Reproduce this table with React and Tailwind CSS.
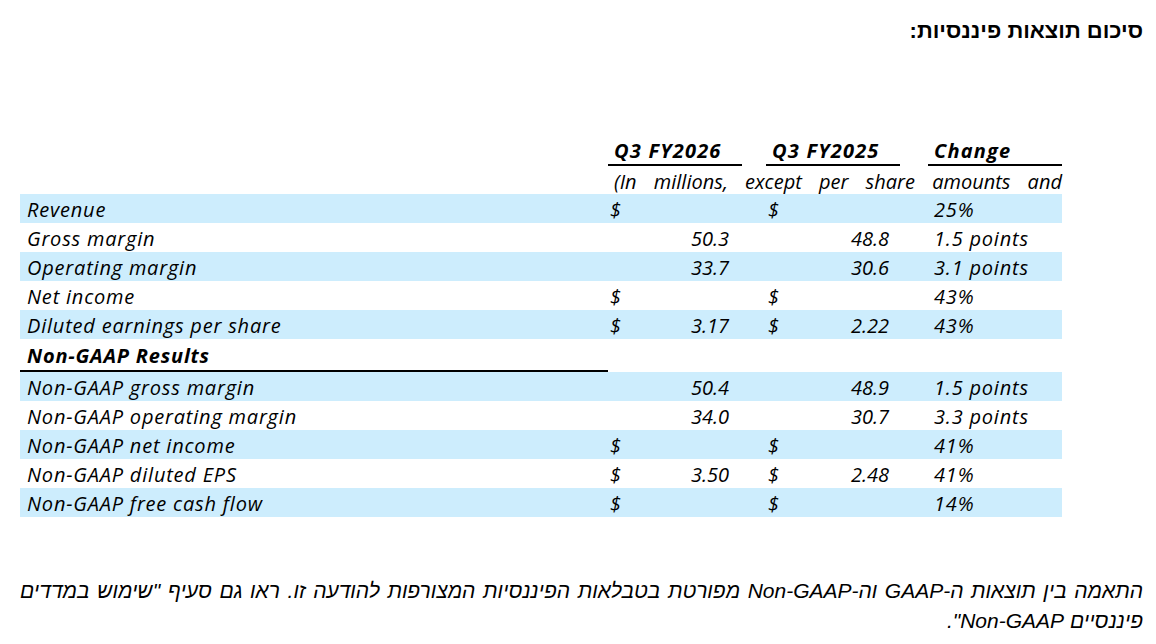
const rows = [
  { label: 'Revenue', d1: true, v1: '', d2: true, v2: '', change: '25%', blue: true },
  { label: 'Gross margin', v1: '50.3', v2: '48.8', change: '1.5 points' },
  { label: 'Operating margin', v1: '33.7', v2: '30.6', change: '3.1 points', blue: true },
  { label: 'Net income', d1: true, v1: '', d2: true, v2: '', change: '43%' },
  { label: 'Diluted earnings per share', d1: true, v1: '3.17', d2: true, v2: '2.22', change: '43%', blue: true },
];

const nonGaapRows = [
  { label: 'Non-GAAP gross margin', v1: '50.4', v2: '48.9', change: '1.5 points', blue: true },
  { label: 'Non-GAAP operating margin', v1: '34.0', v2: '30.7', change: '3.3 points' },
  { label: 'Non-GAAP net income', d1: true, v1: '', d2: true, v2: '', change: '41%', blue: true },
  { label: 'Non-GAAP diluted EPS', d1: true, v1: '3.50', d2: true, v2: '2.48', change: '41%' },
  { label: 'Non-GAAP free cash flow', d1: true, v1: '', d2: true, v2: '', change: '14%', blue: true },
];

function DataRow({ row }) {
  return (
    <div className={`flex h-[29px] items-center pt-[3px] ${row.blue ? 'bg-[#cdedfd]' : ''}`}>
      <div className="w-[588px] whitespace-nowrap pl-[7px] tracking-[0.8px]">{row.label}</div>
      <div className="w-[158px] pl-[2px]">
        <div className="flex w-[119px] justify-between">
          <span>{row.d1 ? '$' : ''}</span>
          <span>{row.v1}</span>
        </div>
      </div>
      <div className="w-[162px] pl-[2px]">
        <div className="flex w-[121px] justify-between">
          <span>{row.d2 ? '$' : ''}</span>
          <span>{row.v2}</span>
        </div>
      </div>
      <div className="w-[134px] whitespace-nowrap pl-[6px] tracking-[0.8px]">{row.change}</div>
    </div>
  );
}

export default function App() {
  const subheader = ['(In', 'millions,', 'except', 'per', 'share', 'amounts', 'and'];

  return (
    <div className="h-[644px] w-[1156px] overflow-hidden bg-white text-black">
      <div
        dir="rtl"
        className="pr-[13px] pt-[16px] text-[22px] font-bold leading-[30px] font-['Liberation_Sans',Arial,sans-serif]"
      >
        סיכום תוצאות פיננסיות:
      </div>

      <div className="ml-[20px] mt-[92px] w-[1042px] text-[20px] italic font-['Open_Sans','Noto_Sans',sans-serif]">
        <div className="flex h-[28px] items-end whitespace-nowrap font-bold tracking-[1.2px]">
          <div className="w-[588px]" />
          <div className="w-[158px]">
            <div className="w-[134px] border-b-2 border-black pl-[6px] leading-[26px]">Q3 FY2026</div>
          </div>
          <div className="w-[162px]">
            <div className="w-[134px] border-b-2 border-black pl-[6px] leading-[26px]">Q3 FY2025</div>
          </div>
          <div className="w-[134px] border-b-2 border-black pl-[6px] leading-[26px]">Change</div>
        </div>

        <div className="flex h-[28px] items-center pt-[3px]">
          <div className="w-[588px]" />
          <div className="flex w-[454px] justify-between pl-[6px]">
            {subheader.map((word) => (
              <span key={word}>{word}</span>
            ))}
          </div>
        </div>

        {rows.map((row) => (
          <DataRow key={row.label} row={row} />
        ))}

        <div className="flex h-[33px]">
          <div className="flex w-[588px] items-center border-b-2 border-black pl-[7px] pt-[2px] font-bold tracking-[0.8px]">
            Non-GAAP Results
          </div>
        </div>

        {nonGaapRows.map((row) => (
          <DataRow key={row.label} row={row} />
        ))}
      </div>

      <div
        dir="rtl"
        className="ml-[20px] mt-[59px] w-[1123px] text-[21px] italic leading-[30px] font-['Liberation_Sans',Arial,sans-serif]"
      >
        <div className="whitespace-nowrap [text-align-last:justify]">
          התאמה בין תוצאות ה-GAAP וה-Non-GAAP מפורטת בטבלאות הפיננסיות המצורפות להודעה זו. ראו גם סעיף "שימוש במדדים
        </div>
        <div>פיננסיים Non-GAAP".</div>
      </div>
    </div>
  );
}
